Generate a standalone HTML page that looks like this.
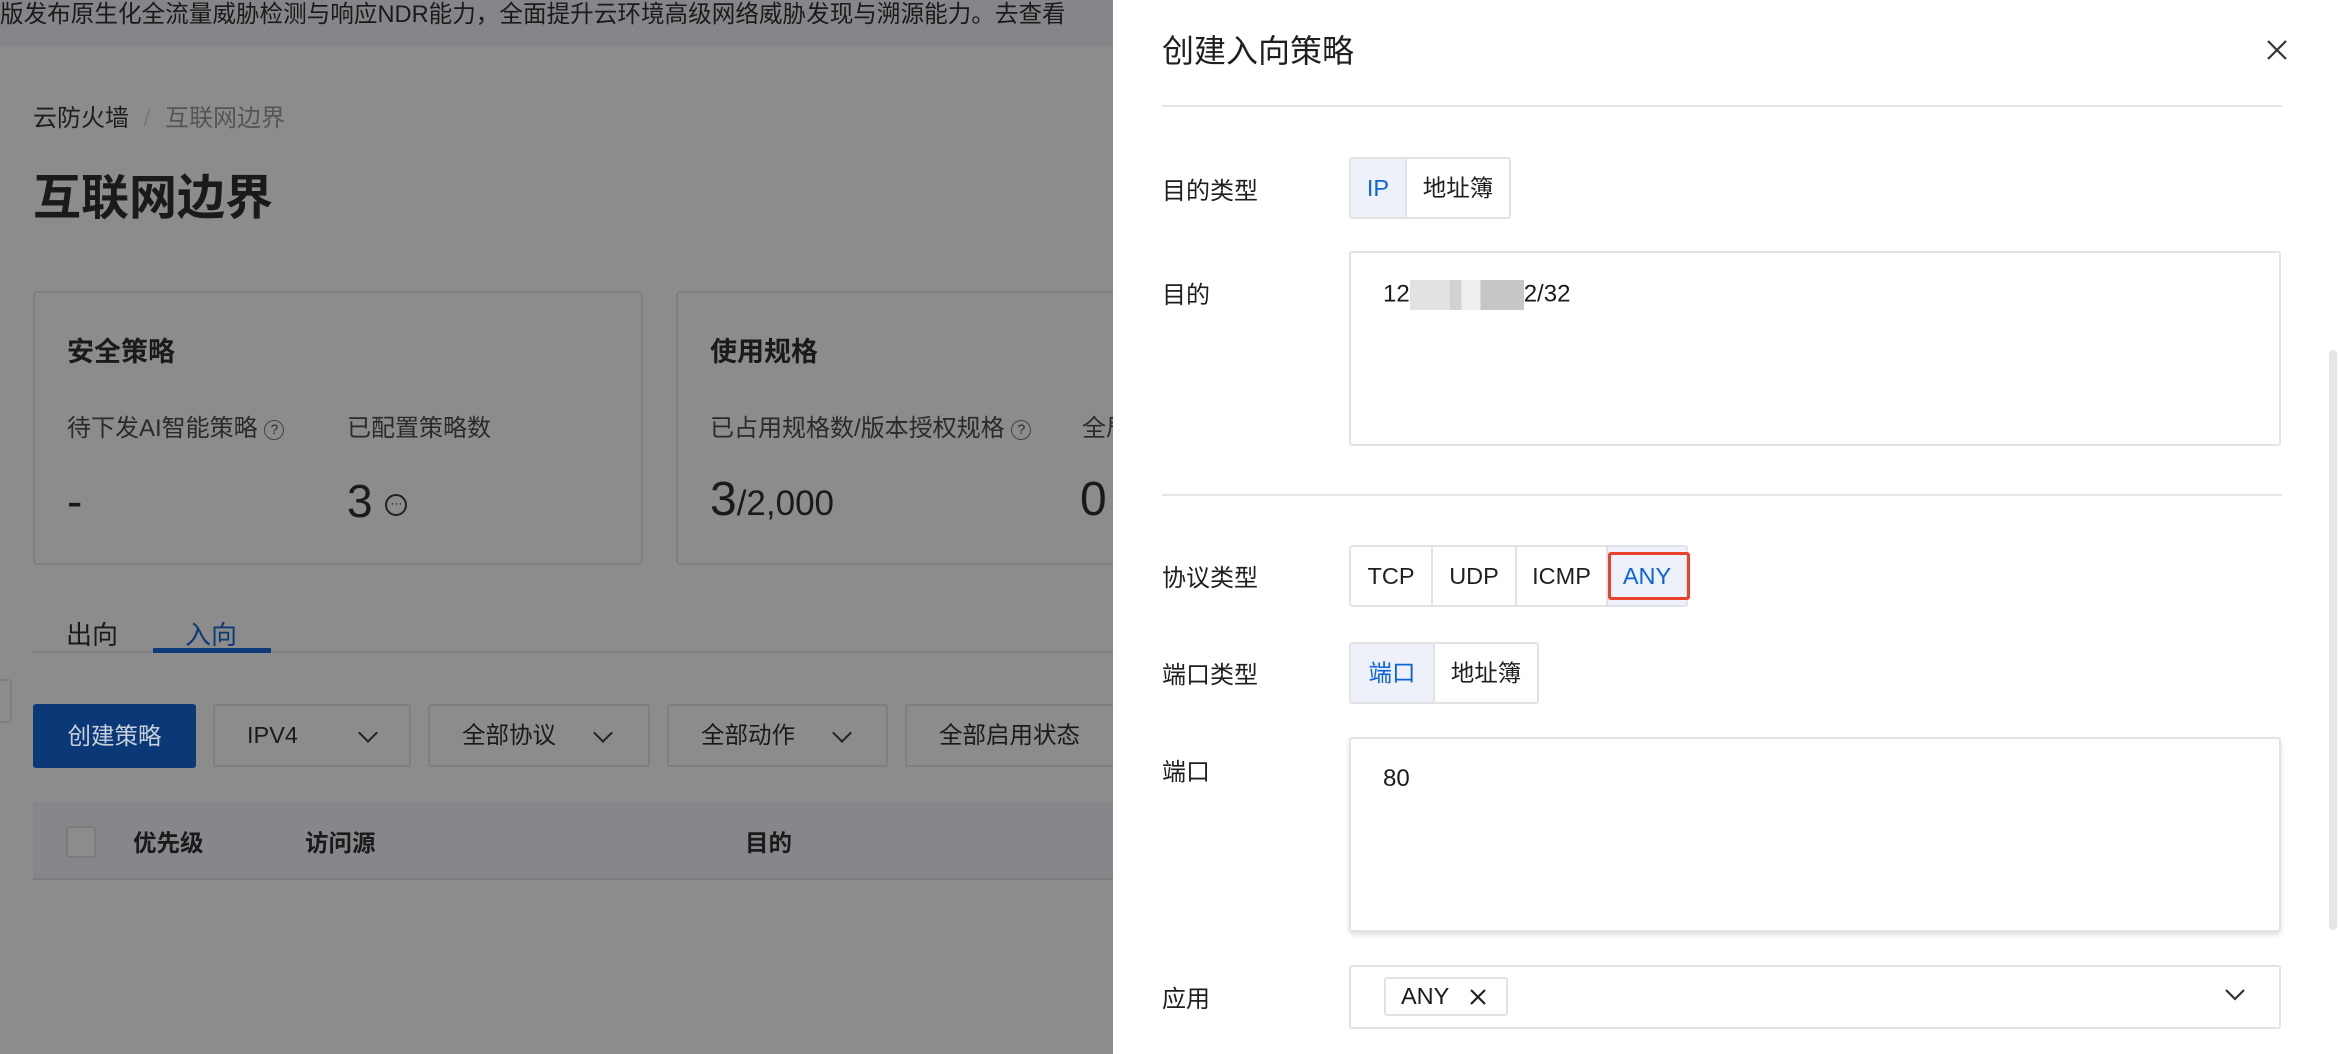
<!DOCTYPE html>
<html><head><meta charset="utf-8"><style>
*{box-sizing:border-box;margin:0;padding:0}
body{width:2340px;height:1054px;overflow:hidden;position:relative;background:#8c8c8c;font-family:"Liberation Sans","Noto Sans CJK SC",sans-serif;color:#1a1a1a}
.a{position:absolute;white-space:nowrap}
.banner{left:0;top:0;width:1113px;height:46px;background:#858689;font-size:23.6px;line-height:30px;color:#1a1a1a}
.card{border:2px solid #7f7f80;border-radius:4px;background:#8c8c8c}
.btn{border:2px solid #7f7f80;border-radius:3px;height:63px;font-size:23.5px;line-height:59px;color:#1a1a1a}
.chev{position:absolute;top:20px;width:14px;height:14px;border-right:2.5px solid #222;border-bottom:2.5px solid #222;transform:rotate(45deg)}
.drawer{left:1113px;top:0;width:1227px;height:1054px;background:#fff}
.lbl{font-size:24px;color:#1f1f1f}
.seg{display:flex;border:2px solid #e3e3e6;border-radius:3px;background:#fff}
.seg div{font-size:23.5px;line-height:58px;text-align:center;border-left:2px solid #e3e3e6;color:#1f1f1f}
.seg div:first-child{border-left:none}
.on{background:#eef1f9;color:#0b65d8!important}
.box{border:2px solid #e3e3e6;border-radius:3px;background:#fff}
</style></head><body>
<div class="a banner">版发布原生化全流量威胁检测与响应NDR能力，全面提升云环境高级网络威胁发现与溯源能力。去查看</div>
<div class="a" style="left:33px;top:98px;font-size:24px;color:#1e1e1e">云防火墙 <span style="color:#777;margin:0 8px">/</span> <span style="color:#555">互联网边界</span></div>
<div class="a" style="left:33px;top:158px;font-size:48px;font-weight:bold;color:#1a1a1a">互联网边界</div>

<div class="a card" style="left:33px;top:291px;width:610px;height:274px"></div>
<div class="a card" style="left:676px;top:291px;width:460px;height:274px"></div>
<div class="a" style="left:67px;top:330px;font-size:27px;font-weight:bold">安全策略</div>
<div class="a" style="left:67px;top:408px;font-size:24px;color:#2a2a2a">待下发AI智能策略 <span style="display:inline-block;width:20px;height:20px;border:1.5px solid #444;border-radius:50%;font-size:14px;line-height:17px;text-align:center;vertical-align:middle">?</span></div>
<div class="a" style="left:347px;top:408px;font-size:24px;color:#2a2a2a">已配置策略数</div>
<div class="a" style="left:67px;top:474px;font-size:46px">-</div>
<div class="a" style="left:347px;top:474px;font-size:46px">3 <span style="display:inline-block;width:22px;height:22px;border:2px solid #222;border-radius:50%;font-size:12px;line-height:14px;text-align:center;vertical-align:middle">···</span></div>
<div class="a" style="left:710px;top:330px;font-size:27px;font-weight:bold">使用规格</div>
<div class="a" style="left:710px;top:408px;font-size:24px;color:#2a2a2a">已占用规格数/版本授权规格 <span style="display:inline-block;width:20px;height:20px;border:1.5px solid #444;border-radius:50%;font-size:14px;line-height:17px;text-align:center;vertical-align:middle">?</span></div>
<div class="a" style="left:1082px;top:408px;font-size:24px;color:#2a2a2a">全局</div>
<div class="a" style="left:710px;top:472px;font-size:48px">3<span style="font-size:35px">/2,000</span></div>
<div class="a" style="left:1080px;top:472px;font-size:48px">0</div>

<div class="a" style="left:66px;top:615px;font-size:26px">出向</div>
<div class="a" style="left:185px;top:615px;font-size:26px;color:#0e3a78">入向</div>
<div class="a" style="left:33px;top:651px;width:1080px;height:2px;background:#7f7f80"></div>
<div class="a" style="left:153px;top:648px;width:118px;height:5px;background:#0e3a78"></div>
<div class="a" style="left:-4px;top:679px;width:16px;height:44px;border:2px solid #7f7f80;border-radius:3px"></div>

<div class="a" style="left:33px;top:704px;width:163px;height:64px;background:#0b3977;border-radius:3px;color:#c8cfdb;font-size:23.5px;line-height:64px;text-align:center">创建策略</div>
<div class="a btn" style="left:213px;top:704px;width:198px"><span style="margin-left:32px">IPV4</span><i class="chev" style="left:146px"></i></div>
<div class="a btn" style="left:428px;top:704px;width:222px"><span style="margin-left:32px">全部协议</span><i class="chev" style="left:166px"></i></div>
<div class="a btn" style="left:667px;top:704px;width:221px"><span style="margin-left:32px">全部动作</span><i class="chev" style="left:166px"></i></div>
<div class="a btn" style="left:905px;top:704px;width:230px"><span style="margin-left:32px">全部启用状态</span></div>

<div class="a" style="left:33px;top:802px;width:1080px;height:78px;background:#86878b;border-bottom:2px solid #7c7c7e"></div>
<div class="a" style="left:66px;top:826px;width:30px;height:32px;border:2px solid #7c7c7e;border-radius:3px;background:#8c8c8c"></div>
<div class="a" style="left:133px;top:824px;font-size:23.5px;font-weight:bold">优先级</div>
<div class="a" style="left:305px;top:824px;font-size:23.5px;font-weight:bold">访问源</div>
<div class="a" style="left:745px;top:824px;font-size:23.5px;font-weight:bold">目的</div>

<div class="a drawer"></div>
<div class="a" style="left:2329px;top:350px;width:8px;height:580px;background:#e6e6e8;border-radius:4px"></div>
<div class="a" style="left:1162px;top:26px;font-size:32px;color:#1f1f1f">创建入向策略</div>
<svg class="a" style="left:2266px;top:39px" width="22" height="22" viewBox="0 0 22 22"><path d="M2 2L20 20M20 2L2 20" stroke="#333" stroke-width="2.2"/></svg>
<div class="a" style="left:1162px;top:105px;width:1120px;height:2px;background:#e6e6e8"></div>

<div class="a lbl" style="left:1162px;top:171px">目的类型</div>
<div class="a seg" style="left:1349px;top:157px"><div class="on" style="width:54px">IP</div><div style="width:104px">地址簿</div></div>
<div class="a lbl" style="left:1162px;top:275px">目的</div>
<div class="a box" style="left:1349px;top:251px;width:932px;height:195px"></div>
<div class="a" style="left:1383px;top:280px;font-size:24px">12<span style="display:inline-block;width:114px;height:30px;vertical-align:middle;background:linear-gradient(90deg,#e2e2e2 0 35%,#d2d2d2 35% 45%,#efefef 45% 62%,#c6c6c6 62% 100%)"></span>2/32</div>
<div class="a" style="left:1162px;top:494px;width:1120px;height:2px;background:#e6e6e8"></div>

<div class="a lbl" style="left:1162px;top:558px">协议类型</div>
<div class="a seg" style="left:1349px;top:545px"><div style="width:80px">TCP</div><div style="width:84px">UDP</div><div style="width:91px">ICMP</div><div class="on" style="width:80px">ANY</div></div>
<div class="a" style="left:1608px;top:552px;width:82px;height:48px;border:3px solid #e8422a;border-radius:3px"></div>

<div class="a lbl" style="left:1162px;top:655px">端口类型</div>
<div class="a seg" style="left:1349px;top:642px"><div class="on" style="width:82px">端口</div><div style="width:104px">地址簿</div></div>
<div class="a lbl" style="left:1162px;top:752px">端口</div>
<div class="a box" style="left:1349px;top:737px;width:932px;height:195px;box-shadow:0 3px 6px rgba(0,0,0,.12)"></div>
<div class="a" style="left:1383px;top:765px;font-size:24px">80</div>

<div class="a lbl" style="left:1162px;top:979px">应用</div>
<div class="a box" style="left:1349px;top:965px;width:932px;height:64px"></div>
<div class="a" style="left:1384px;top:977px;width:124px;height:39px;border:2px solid #e3e3e6;border-radius:3px;font-size:23.5px;line-height:35px;padding-left:15px">ANY</div>
<svg class="a" style="left:1469px;top:988px" width="18" height="18" viewBox="0 0 18 18"><path d="M2 2L16 16M16 2L2 16" stroke="#222" stroke-width="2.2"/></svg>
<svg class="a" style="left:2224px;top:988px" width="22" height="14" viewBox="0 0 22 14"><path d="M2 2L11 11L20 2" stroke="#333" stroke-width="2.2" fill="none"/></svg>
</body></html>
